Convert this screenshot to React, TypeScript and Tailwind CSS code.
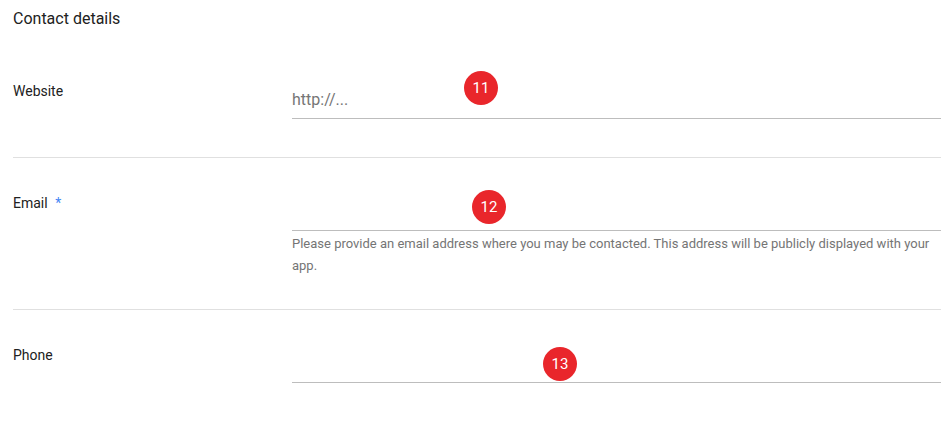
import React from 'react';

const Badge: React.FC<{ n: number; className: string }> = ({ n, className }) => (
    <div
        className={`absolute w-[34px] h-[34px] rounded-full bg-[#e9262b] text-white text-[15px] flex items-center justify-center ${className}`}
    >
        {n}
    </div>
);

const App: React.FC = () => {
    return (
        <div className="w-[952px] h-[434px] bg-white pl-[13px] pr-[11px] overflow-hidden" style={{ fontFamily: 'Roboto, "Liberation Sans", sans-serif' }}>
            <div className="h-[46px] pt-[9px] text-[16px] leading-[20px] text-[#212121]">Contact details</div>

            {/* Website */}
            <div className="flex border-b border-[#e0e0e0] pb-[38px]">
                <div className="w-[279px] pt-[36px] text-[14px] leading-[18px] text-[#212121]">Website</div>
                <div className="relative flex-1 pt-[40px]">
                    <div className="h-[33px] pb-[4px] border-b border-[#bdbdbd] flex items-center text-[16px] text-[#757575]">
                        http://...
                    </div>
                    <Badge n={11} className="left-[172px] top-[25px]" />
                </div>
            </div>

            {/* Email */}
            <div className="flex border-b border-[#e0e0e0] pb-[32px]">
                <div className="w-[279px] pt-[36px] text-[14px] leading-[18px] text-[#212121]">
                    Email <span className="ml-[4px] text-[#4285f4]">*</span>
                </div>
                <div className="relative flex-1 pt-[40px]">
                    <div className="h-[33px] border-b border-[#bdbdbd]" />
                    <p className="mt-[2px] text-[13px] leading-[22px] text-[#757575]">
                        Please provide an email address where you may be contacted. This address will be publicly displayed with your app.
                    </p>
                    <Badge n={12} className="left-[180px] top-[32px]" />
                </div>
            </div>

            {/* Phone */}
            <div className="flex">
                <div className="w-[279px] pt-[36px] text-[14px] leading-[18px] text-[#212121]">Phone</div>
                <div className="relative flex-1 pt-[40px]">
                    <div className="h-[33px] border-b border-[#bdbdbd]" />
                    <Badge n={13} className="left-[251px] top-[37px]" />
                </div>
            </div>
        </div>
    );
};

export default App;
